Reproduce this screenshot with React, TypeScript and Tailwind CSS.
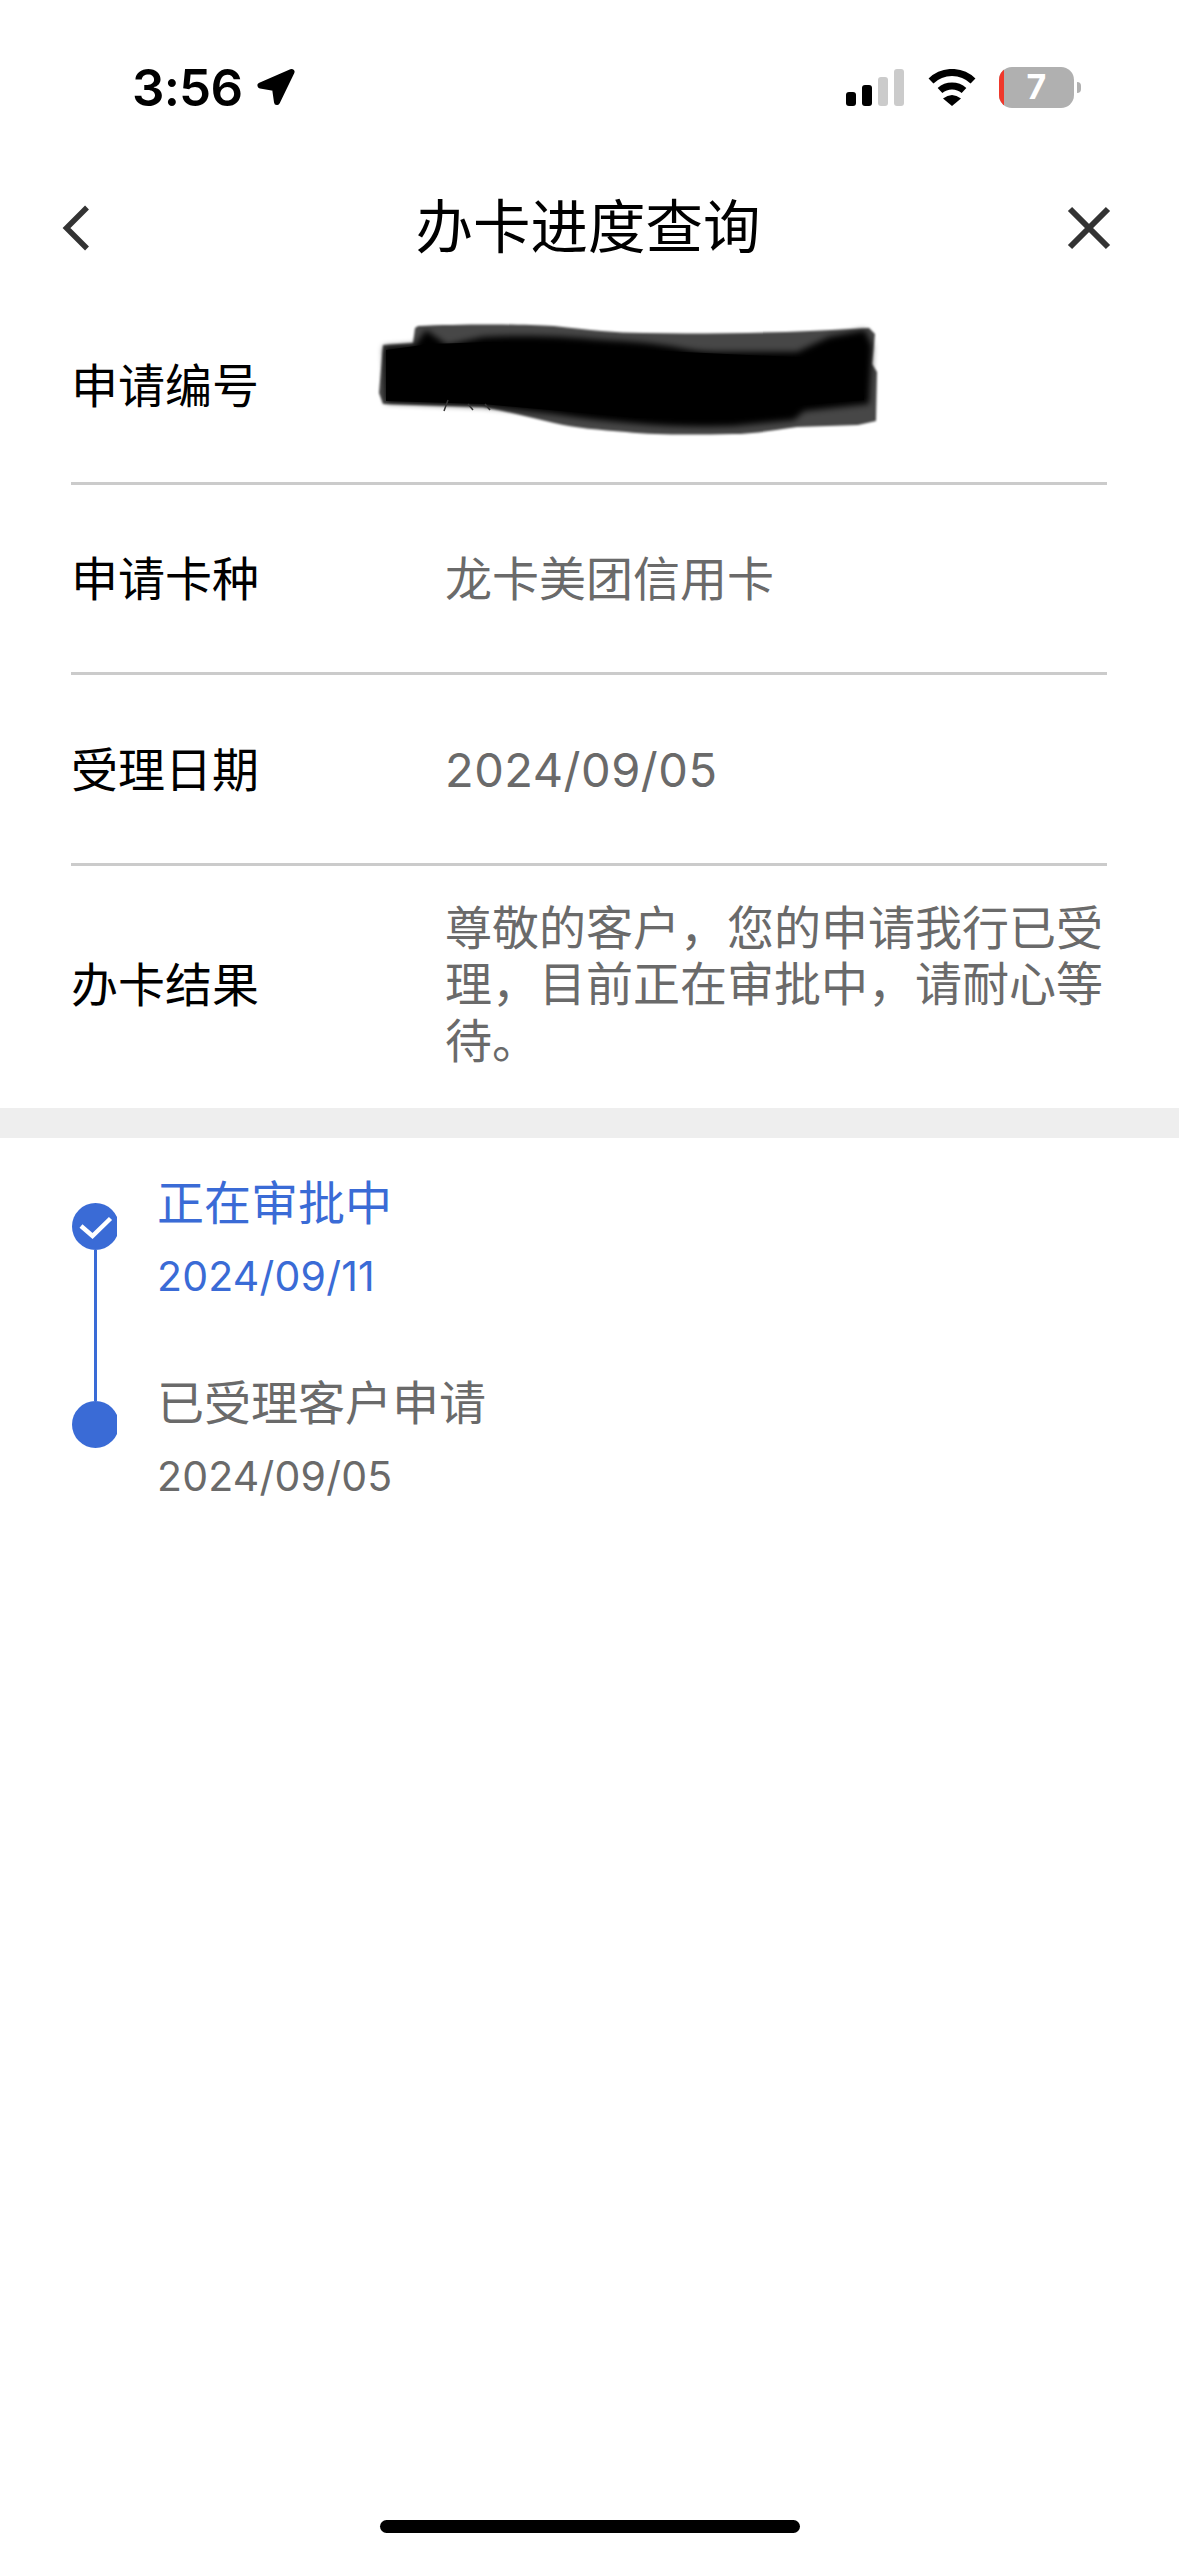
const fontStack = "font-['Inter','Noto_Sans_CJK_SC',sans-serif]";

function Arrow() {
  return (
    <svg width="40" height="40" viewBox="0 0 40 40" className="ml-[14px]">
      <path d="M35.5 5 L4.5 18.5 L19 21 L21 35 Z" fill="#000" stroke="#000" strokeWidth="6" strokeLinejoin="round" />
    </svg>
  );
}

function Wifi() {
  return (
    <svg width="50" height="37" viewBox="0 0 50 37" fill="none">
      <path d="M4 12 A 30 30 0 0 1 46 12" stroke="#000" strokeWidth="7" />
      <path d="M13 21.5 A 18 18 0 0 1 37 21.5" stroke="#000" strokeWidth="7" />
      <path d="M25 37 L16 29.5 Q25 22.5 34 29.5 Z" fill="#000" />
    </svg>
  );
}

function StatusBar() {
  return (
    <div className="flex h-[174px] items-center justify-between pl-[132px] pr-[98px]">
      <div className="flex items-center">
        <span className="text-[51px] leading-none font-semibold tracking-[-0.8px] text-black">3:56</span>
        <Arrow />
      </div>
      <div className="flex items-center">
        <div className="flex h-[37px] items-end gap-[6px]">
          <div className="h-[14px] w-[10px] rounded-[3px] bg-black" />
          <div className="h-[21px] w-[10px] rounded-[3px] bg-black" />
          <div className="h-[29px] w-[10px] rounded-[3px] bg-[#cbcbcb]" />
          <div className="h-[37px] w-[10px] rounded-[3px] bg-[#cbcbcb]" />
        </div>
        <div className="ml-[23px]">
          <Wifi />
        </div>
        <div className="relative ml-[22px] flex h-[41px] w-[75px] items-center justify-center overflow-hidden rounded-[13px] bg-[#b0b0b0]">
          <div className="absolute inset-y-0 left-0 w-[5px] bg-[#f0382b]" />
          <span className="text-[34px] leading-none font-bold text-white">7</span>
        </div>
        <div className="ml-[3px] h-[11px] w-[4px] rounded-r-full bg-[#b0b0b0]" />
      </div>
    </div>
  );
}

function NavBar() {
  return (
    <div className="grid h-[108px] grid-cols-[1fr_auto_1fr] items-center px-[56px]">
      <svg width="40" height="56" viewBox="0 0 40 56" fill="none">
        <path d="M31 7.5 L10.5 28 L31 48.5" stroke="#333" strokeWidth="5.5" />
      </svg>
      <h1 className="mr-[3px] text-[57.5px] leading-none font-normal text-black">办卡进度查询</h1>
      <svg width="48" height="48" viewBox="0 0 48 48" fill="none" className="mr-[10px] justify-self-end">
        <path d="M5 5 L43 43 M43 5 L5 43" stroke="#333" strokeWidth="6" />
      </svg>
    </div>
  );
}

function Row({ label, value, h, mono }: { label: string; value: string; h: string; mono?: boolean }) {
  return (
    <div className={`flex items-center border-b-[3px] border-[#cbcbcb] ${h}`}>
      <div className="w-[374px] text-[47px] leading-[57px] text-black">{label}</div>
      <div className={`flex-1 text-[47px] leading-[57px] text-[#6a6a6a] ${mono ? "tracking-[0.5px]" : ""}`}>{value}</div>
    </div>
  );
}

// the hand-drawn scribble hiding the application number
function Redaction() {
  return (
    <svg
      width="560"
      height="150"
      viewBox="0 0 560 150"
      className="absolute left-[340px] top-[300px]"
    >
      <defs>
        <filter id="soft" x="-5%" y="-10%" width="110%" height="120%">
          <feGaussianBlur stdDeviation="1.2" />
        </filter>
        <filter id="softer" x="-5%" y="-10%" width="110%" height="120%">
          <feGaussianBlur stdDeviation="3" />
        </filter>
      </defs>
      <path
        d="M75 28 L78 26 C120 24 180 24 214 26 C250 30 275 33 304 33 C350 34 400 33 446 32 C480 31 505 29 529 28 L535 34 L532 64 L537 72 L536 121 L518 125 L457 127 C430 131 410 134 393 134 C350 135 315 135 286 132 C260 130 235 128 214 123 C190 117 165 111 143 107 L43 104 L39 93 L43 45 L73 43 Z"
        fill="#000"
        fillOpacity="0.72"
        filter="url(#soft)"
      />
      <path
        d="M86 30 L107 45 L143 37 C180 35 220 36 250 39 C280 41 305 42 329 46 C345 49 360 52 375 52 L457 52 L489 37 L525 30 L532 46 L529 104 L464 111 L454 120 L393 126 C340 128 280 124 214 114 L143 106 L46 102 L44 47 L75 45 Z"
        fill="#000"
        filter="url(#softer)"
      />
      <path
        d="M46 50 L90 44 L150 42 L300 50 L520 60 L524 100 L300 118 L143 104 L46 101 Z"
        fill="#000"
      />
      <path d="M108 100 L104 111 M128 104 L133 110 M145 104 L150 110" stroke="#333" strokeWidth="1.5" />
    </svg>
  );
}

function Dot({ check }: { check?: boolean }) {
  return (
    <div className="h-[47px] w-[45px] overflow-hidden">
      <div className="h-[47px] w-[47px] rounded-full bg-[#3a6bd6]">
        {check && (
          <svg width="47" height="47" viewBox="0 0 47 47" fill="none">
            <path d="M9 23 L20.5 33 L38.5 15.5" stroke="#fff" strokeWidth="4.5" />
          </svg>
        )}
      </div>
    </div>
  );
}

function Step({ title, date, color, first }: { title: string; date: string; color: string; first?: boolean }) {
  return (
    <div className={first ? "h-[200px]" : ""} style={{ color }}>
      <div className="text-[47px] leading-[57px]">{title}</div>
      <div className="mt-[20px] text-[41px] leading-[50px] tracking-[0.2px]">{date}</div>
    </div>
  );
}

export default function App() {
  return (
    <div className={`relative flex h-[2556px] w-[1179px] flex-col overflow-hidden bg-white ${fontStack}`}>
      <StatusBar />
      <NavBar />
      <div className="mx-[71px] w-[1036px]">
        <Row label="申请编号" value="" h="h-[203px] pt-[6px]" />
        <Row label="申请卡种" value="龙卡美团信用卡" h="h-[190px]" />
        <Row label="受理日期" value="2024/09/05" h="h-[191px]" mono />
        <div className="flex h-[242px] items-center pb-[5px]">
          <div className="w-[374px] text-[47px] leading-[57px] text-black">办卡结果</div>
          <div className="flex-1 text-[47px] leading-[56.5px] text-[#6a6a6a]">
            尊敬的客户，您的申请我行已受理，目前正在审批中，请耐心等待。
          </div>
        </div>
      </div>
      <div className="h-[30px] bg-[#eeeeee]" />
      <div className="flex pl-[72px] pt-[36px]">
        <div className="flex w-[85px] flex-col pt-[29px]">
          <Dot check />
          <div className="ml-[22px] h-[151px] w-[3px] bg-[#3a6bd6]" />
          <Dot />
        </div>
        <div>
          <Step title="正在审批中" date="2024/09/11" color="#3a6bd6" first />
          <Step title="已受理客户申请" date="2024/09/05" color="#6a6a6a" />
        </div>
      </div>
      <div className="mt-auto mb-[23px] flex justify-center">
        <div className="h-[13px] w-[420px] rounded-full bg-black" />
      </div>
      <Redaction />
    </div>
  );
}
